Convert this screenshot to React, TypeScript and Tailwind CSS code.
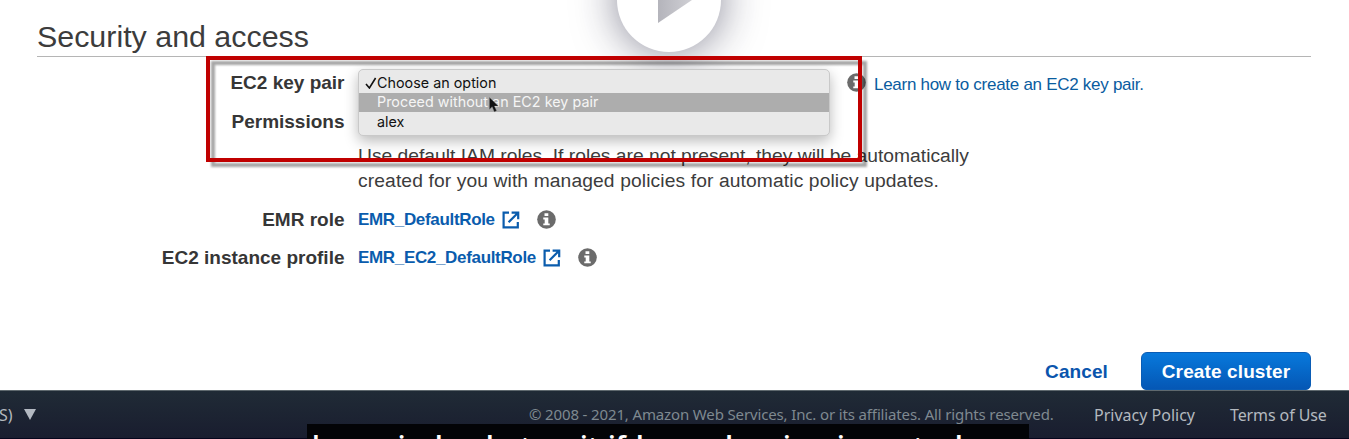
import type { ReactNode } from "react";

function InfoIcon() {
  return (
    <svg viewBox="0 0 20 20" className="block h-[19px] w-[19px] shrink-0">
      <circle cx="10" cy="10" r="9.8" fill="#6b6b6b" />
      <path d="M7.9 3.3h4v2.9h-4zM6.6 8h5.3v6.2h1.5v1.9H6.6v-1.9h1.5V9.9H6.6z" fill="#fff" />
    </svg>
  );
}

function ExternalIcon() {
  return (
    <svg viewBox="0 0 18 18" className="block h-[18px] w-[18px] shrink-0" fill="none" stroke="#0a5cad" strokeWidth="2.2">
      <path d="M7 1.6H1.6v14.8h14.2V11" />
      <path d="M9.6 1.6h6.6v6.6M15.8 2L6.6 11.2" />
    </svg>
  );
}

function Row({ label, className, children }: { label: string; className: string; children?: ReactNode }) {
  return (
    <div className={`flex items-center ${className}`}>
      <div className="w-[345px] shrink-0 pr-[0.5px] text-right text-[19px] font-bold text-[#363636]">{label}</div>
      {children}
    </div>
  );
}

function RoleLink({ name }: { name: string }) {
  return (
    <div className="ml-[13px] flex items-center text-[#0a5cad]">
      <a className="text-[17px] font-bold tracking-[-0.33px] whitespace-nowrap">{name}</a>
      <span className="ml-[7px]"><ExternalIcon /></span>
      <span className="-mt-px ml-[17px]"><InfoIcon /></span>
    </div>
  );
}

function SelectMenu() {
  return (
    <div className="absolute top-[69px] left-[358px] h-[67px] w-[472px] rounded-[5px] border border-[#c9c9c9] bg-[#e9e9e9] pt-[3px] font-['Inter',sans-serif] text-[14.3px] leading-5 text-[#111] shadow-[0_5px_14px_rgba(0,0,0,0.28)]">
      <div className="flex h-5 items-center pl-1.5">
        <svg viewBox="0 0 12 12" className="h-3 w-3 shrink-0" fill="none" stroke="#111" strokeWidth="1.6">
          <path d="M1 7l3.4 4L10.6 1" />
        </svg>
        <span className="tracking-[0.03px]">Choose an option</span>
      </div>
      <div className="h-[19px] bg-[#adadad] pl-[18px] leading-[18px] tracking-[0.04px] text-[#f5f5f5]">Proceed without an EC2 key pair</div>
      <div className="pl-[18px]">alex</div>
    </div>
  );
}

function PlayButton() {
  return (
    <div className="absolute -top-[52px] left-[617px] h-[104px] w-[104px] rounded-full bg-white shadow-[0_0_44px_rgba(25,25,55,0.55)]">
      <svg viewBox="0 0 104 104" className="h-full w-full">
        <defs>
          <linearGradient id="play" x1="0" x2="1">
            <stop offset="0" stopColor="#b4b4bb" />
            <stop offset="1" stopColor="#d0d0d5" />
          </linearGradient>
        </defs>
        <path d="M41 29v46l34-23z" fill="url(#play)" />
      </svg>
    </div>
  );
}

function Caption() {
  return (
    <div className="absolute top-[424px] left-[307px] flex h-[36px] w-[722px] bg-[#030407] pt-[3px] pl-[5px] font-['Noto_Sans',sans-serif] text-[27px] leading-[38px] font-semibold whitespace-nowrap text-white">
      <span className="w-[123px]">key pair</span>
      <span className="w-[51px]">has</span>
      <span className="w-[94px]">but we</span>
      <span className="w-[28px]">it</span>
      <span className="w-[28px]">if</span>
      <span className="w-[80px]">has a</span>
      <span className="w-[67px]">do a</span>
      <span className="w-[54px]">is a</span>
      <span className="w-[76px]">is one</span>
      <span className="w-[42px]">to</span>
      <span>here</span>
    </div>
  );
}

export default function App() {
  return (
    <div className="relative flex h-[439px] w-[1349px] flex-col overflow-hidden bg-white font-['Liberation_Sans',Arial,sans-serif]">
      <PlayButton />
      <h1 className="relative ml-[37px] h-[57px] w-[1274px] border-b border-[#b5b5b5] pt-[18px] text-[30.4px] leading-[36px] text-[#3c3c3c]">
        Security and access
      </h1>
      <main className="relative flex flex-1 flex-col">
        <Row label="EC2 key pair" className="mt-[13px] h-[26px]">
          <span className="-mt-px ml-[502px]"><InfoIcon /></span>
          <a className="mt-[3px] ml-2 text-[17px] tracking-[-0.28px] whitespace-nowrap text-[#0a5c9f]">Learn how to create an EC2 key pair.</a>
        </Row>
        <Row label="Permissions" className="mt-[13px] h-[26px]" />
        <p className="mt-[8px] ml-[358px] text-[19.25px] leading-[25px] whitespace-nowrap text-[#3c3c3c]">
          Use default IAM roles. If roles are not present, they will be automatically
          <br />
          <span className="tracking-[0.11px]">created for you with managed policies for automatic policy updates.</span>
        </p>
        <Row label="EMR role" className="mt-[14px] h-[26px]">
          <RoleLink name="EMR_DefaultRole" />
        </Row>
        <Row label="EC2 instance profile" className="mt-[12px] h-[26px]">
          <RoleLink name="EMR_EC2_DefaultRole" />
        </Row>
        <div className="mt-auto mr-[38px] flex items-center justify-end text-[19px] font-bold">
          <a className="mt-0.5 mr-[33px] tracking-[0.1px] text-[#0a55ad]">Cancel</a>
          <button className="h-[38px] w-[170px] rounded-t-md rounded-b-[5px] border border-[#0a5cb5] bg-linear-to-b from-[#0879dc] to-[#0557b5] pt-0.5 tracking-[0.12px] text-white">
            Create cluster
          </button>
        </div>
      </main>
      <footer className="relative flex h-[49px] items-center border-t border-b border-t-[#5f696e] border-b-[#05051c] bg-linear-to-b from-[#202b36] to-[#191d2f] font-['Noto_Sans',sans-serif] text-[16px] whitespace-nowrap text-[#b3b9bf]">
        <span className="ml-[-1px] w-[25px]">S)</span>
        <svg viewBox="0 0 12 11" className="h-[11px] w-3"><path d="M0 0h12L6 11z" fill="#b3b9c2" /></svg>
        <span className="ml-[493px] w-[565px] text-[15px] tracking-[-0.14px] text-[#7f8990]">© 2008 - 2021, Amazon Web Services, Inc. or its affiliates. All rights reserved.</span>
        <span className="w-[136px]">Privacy Policy</span>
        <span className="tracking-[-0.1px]">Terms of Use</span>
      </footer>
      <SelectMenu />
      <svg viewBox="0 0 10 16" className="absolute top-[97px] left-[489px] h-4 w-2.5">
        <path d="M.5.5v11.7l2.7-2.5 2.1 5 2.2-1-2.1-4.6h3.9z" fill="#111" stroke="#777" strokeWidth=".4" />
      </svg>
      <div className="absolute top-[56px] left-[206px] h-[106px] w-[656px] border-4 border-[#c00000] drop-shadow-[5px_5px_1px_rgba(0,0,0,0.35)]" />
      <Caption />
    </div>
  );
}
